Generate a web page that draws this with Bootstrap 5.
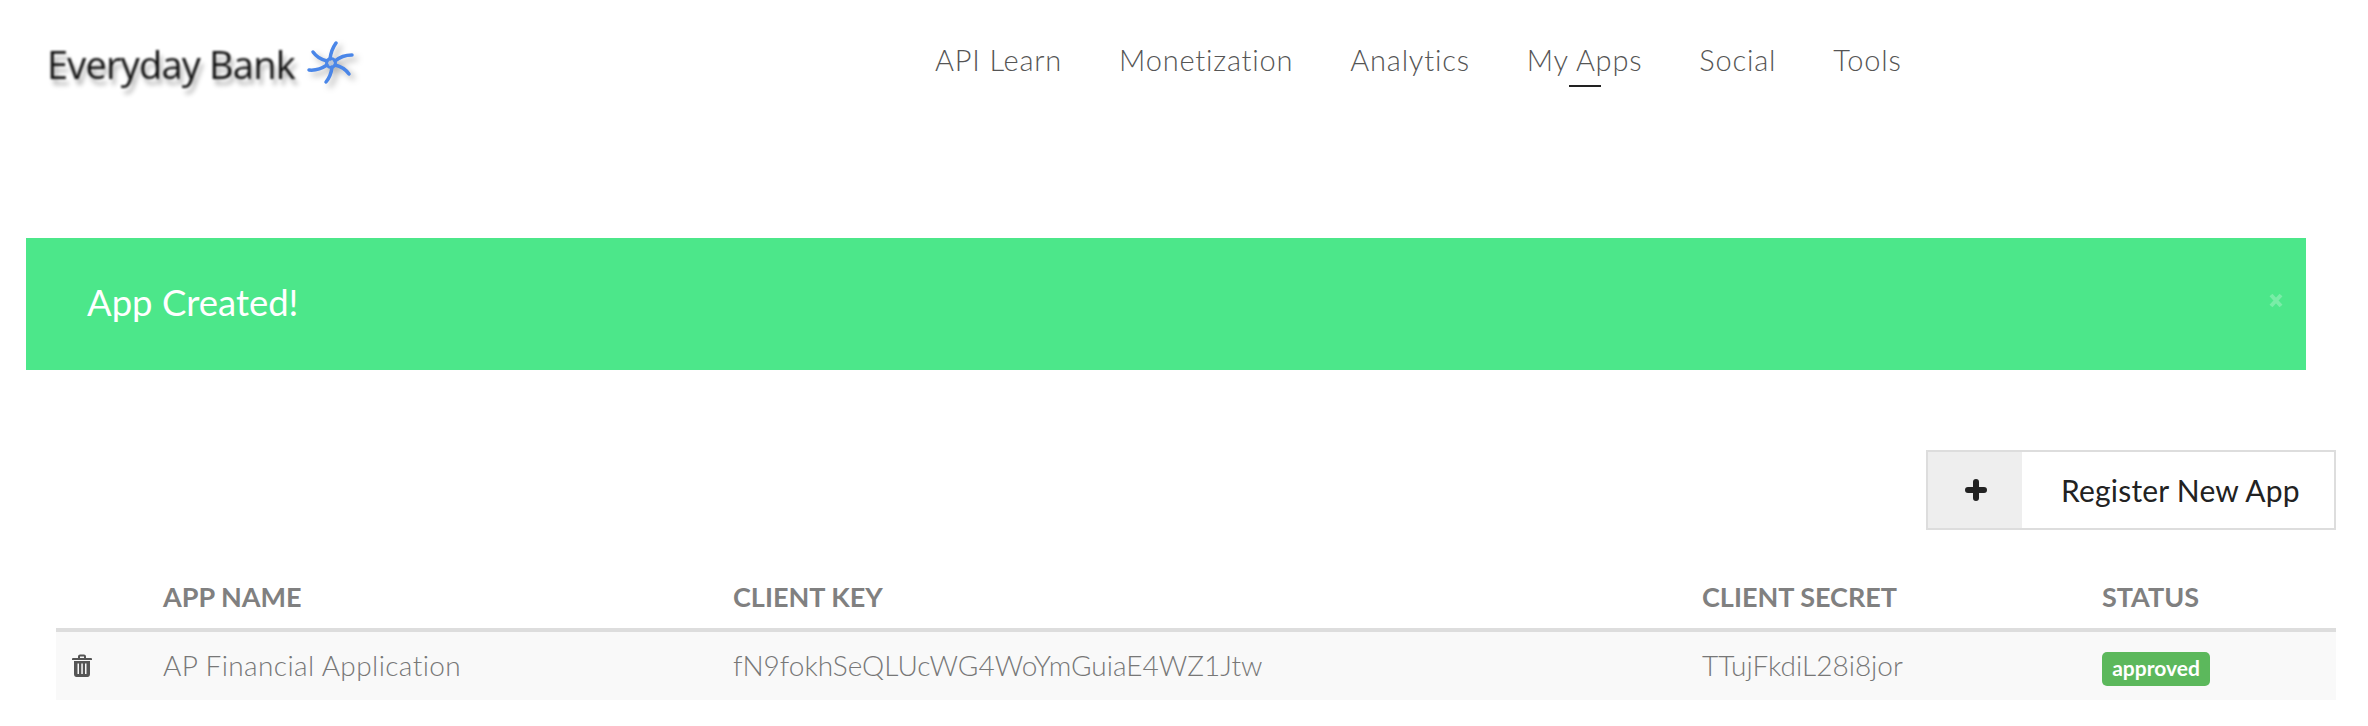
<!DOCTYPE html>
<html lang="en">
<head>
  <meta charset="UTF-8">
  <meta name="viewport" content="width=device-width, initial-scale=1.0">
  <title>My Apps - Everyday Bank</title>
  <link href="https://cdn.jsdelivr.net/npm/bootstrap@5.3.2/dist/css/bootstrap.min.css" rel="stylesheet">
  <style>
    body {
      background-color: #fff;
      font-family: "Lato", "Open Sans", sans-serif;
      font-weight: 300;
      color: #555;
    }
    .top-bar {
      height: 120px;
      padding: 0 0 0 47px;
    }
    .brand-box {
      width: 888px;
      padding-top: 8px;
      gap: 11px;
      text-decoration: none;
    }
    .brand-text {
      font-family: "Open Sans", sans-serif;
      font-size: 38px;
      font-weight: 400;
      letter-spacing: -0.8px;
      line-height: 1;
      color: #111;
      text-shadow: 3px 6px 4px rgba(0, 0, 0, 0.3);
      filter: blur(0.8px);
    }
    .brand-star {
      width: 50px;
      height: 44px;
      margin-top: -3px;
      filter: drop-shadow(4px 4px 3px rgba(0, 0, 0, 0.3)) blur(0.4px);
    }
    .top-links {
      gap: 57px;
    }
    .top-links .nav-link {
      position: relative;
      padding: 0;
      font-size: 29px;
      letter-spacing: 0.8px;
      line-height: 40px;
      color: #555;
    }
    .top-links .nav-link.active::after {
      content: "";
      position: absolute;
      left: 42px;
      bottom: -7px;
      width: 32px;
      height: 2px;
      background: #222;
    }
    .created-alert {
      margin: 118px 62px 0 26px;
      height: 132px;
      padding: 0 23px 3px 61px;
      border: 0;
      border-radius: 0;
      background: #4ce78a;
      color: #fff;
      font-size: 36.5px;
      font-weight: 400;
    }
    .alert-x {
      color: rgba(255, 255, 255, 0.25);
      background: none;
      border: 0;
      padding: 0;
      margin-top: -13px;
      line-height: 1;
    }
    .action-row {
      margin: 80px 32px 0 0;
    }
    .register-btn {
      display: flex;
      align-items: stretch;
      width: 410px;
      height: 80px;
      padding: 0;
      border: 2px solid #ddd;
      border-radius: 0;
      background: #fff;
      color: #222;
      font-size: 30px;
      font-weight: 400;
      letter-spacing: 0.2px;
    }
    .register-plus {
      display: flex;
      align-items: center;
      justify-content: center;
      width: 94px;
      background: #eee;
      padding-left: 2px;
    }
    .register-label {
      flex: 1;
      align-self: center;
      padding-left: 39px;
      text-align: left;
      white-space: nowrap;
    }
    .app-table {
      width: 2280px;
      margin: 20px 0 0 56px;
      table-layout: fixed;
      font-size: 28px;
    }
    .app-table th {
      padding: 32px 0 16px 13px;
      border-bottom: 4px solid #ddd;
      color: #808080;
      font-size: 27px;
      font-weight: 700;
      line-height: 30px;
    }
    .app-table td {
      height: 70px;
      padding: 0 0 2px 13px;
      border: 0;
      background: #f9f9f9;
      vertical-align: middle;
      color: #777;
    }
    .app-table td.name-cell {
      letter-spacing: 0.4px;
    }
    .col-trash { width: 94px; }
    .col-name { width: 570px; }
    .col-key { width: 969px; }
    .col-secret { width: 400px; }
    .trash-icon {
      display: block;
      width: 22px;
      height: 23px;
      margin-left: 2px;
    }
    .status-pill {
      display: inline-block;
      width: 108px;
      height: 34px;
      border-radius: 5px;
      background: #5cb85c;
      color: #fff;
      font-size: 21px;
      font-weight: 700;
      line-height: 32px;
      text-align: center;
      vertical-align: middle;
    }
  </style>
</head>
<body>
  <!-- Navigation -->
  <nav class="top-bar d-flex align-items-center">
    <a class="brand-box d-flex align-items-center" href="#">
      <span class="brand-text">Everyday Bank</span>
      <svg class="brand-star" viewBox="0 0 50 44" fill="none" stroke="#4a86e8" stroke-width="3.500" stroke-linecap="round">
        <circle cx="25" cy="22" r="4.500" fill="#b9c4d6" stroke-width="3" stroke="#4a86e8"/>
        <path d="M24 18 Q25 9 30 2"/>
        <path d="M29 20 Q36 14 46 14"/>
        <path d="M29 24 Q38 26 43 33"/>
        <path d="M26 26 Q25 35 20 41"/>
        <path d="M21 24 Q12 30 3 29"/>
        <path d="M21 20 Q12 18 7 11"/>
      </svg>
    </a>
    <ul class="nav top-links">
      <li class="nav-item"><a class="nav-link" href="#">API Learn</a></li>
      <li class="nav-item"><a class="nav-link" href="#">Monetization</a></li>
      <li class="nav-item"><a class="nav-link" href="#">Analytics</a></li>
      <li class="nav-item"><a class="nav-link active" href="#">My Apps</a></li>
      <li class="nav-item"><a class="nav-link" href="#">Social</a></li>
      <li class="nav-item"><a class="nav-link" href="#">Tools</a></li>
    </ul>
  </nav>

  <!-- Alert -->
  <div class="alert created-alert d-flex align-items-center justify-content-between" role="alert">
    <span>App Created!</span>
    <button type="button" class="alert-x" aria-label="Close">
      <svg width="14" height="15" viewBox="0 0 14 15" fill="none" stroke="currentColor" stroke-width="4"><path d="M2 2 12 13M12 2 2 13"/></svg>
    </button>
  </div>

  <div class="action-row d-flex justify-content-end">
    <button type="button" class="btn register-btn">
      <span class="register-plus">
        <svg width="22" height="22" viewBox="0 0 22 22" fill="none" stroke="#222" stroke-width="6" stroke-linecap="round"><path d="M11 3v16M3 11h16"/></svg>
      </span>
      <span class="register-label">Register New App</span>
    </button>
  </div>

  <!-- Apps table -->
  <table class="table app-table mb-0">
    <thead>
      <tr>
        <th class="col-trash"></th>
        <th class="col-name">APP NAME</th>
        <th class="col-key">CLIENT KEY</th>
        <th class="col-secret">CLIENT SECRET</th>
        <th>STATUS</th>
      </tr>
    </thead>
    <tbody>
      <tr>
        <td>
          <svg class="trash-icon" viewBox="0 0 22 23" fill="#555">
            <path d="M7 4V2.500C7 1.200 8 .5 9 .5h4c1 0 2 .7 2 2V4h5a1 1 0 0 1 1 1v1H1V5a1 1 0 0 1 1-1zm2 0h4V2.500H9zM3 7h16v13c0 1.700-1 3-2.500 3h-11C4 23 3 21.700 3 20zm3.500 2.500V20h1.500V9.500zm3.800 0V20h1.500V9.500zm3.700 0V20h1.500V9.500z" fill-rule="evenodd"/>
          </svg>
        </td>
        <td class="name-cell">AP Financial Application</td>
        <td>fN9fokhSeQLUcWG4WoYmGuiaE4WZ1Jtw</td>
        <td>TTujFkdiL28i8jor</td>
        <td><span class="status-pill">approved</span></td>
      </tr>
    </tbody>
  </table>

  <script src="https://cdn.jsdelivr.net/npm/bootstrap@5.3.2/dist/js/bootstrap.bundle.min.js"></script>
</body>
</html>
